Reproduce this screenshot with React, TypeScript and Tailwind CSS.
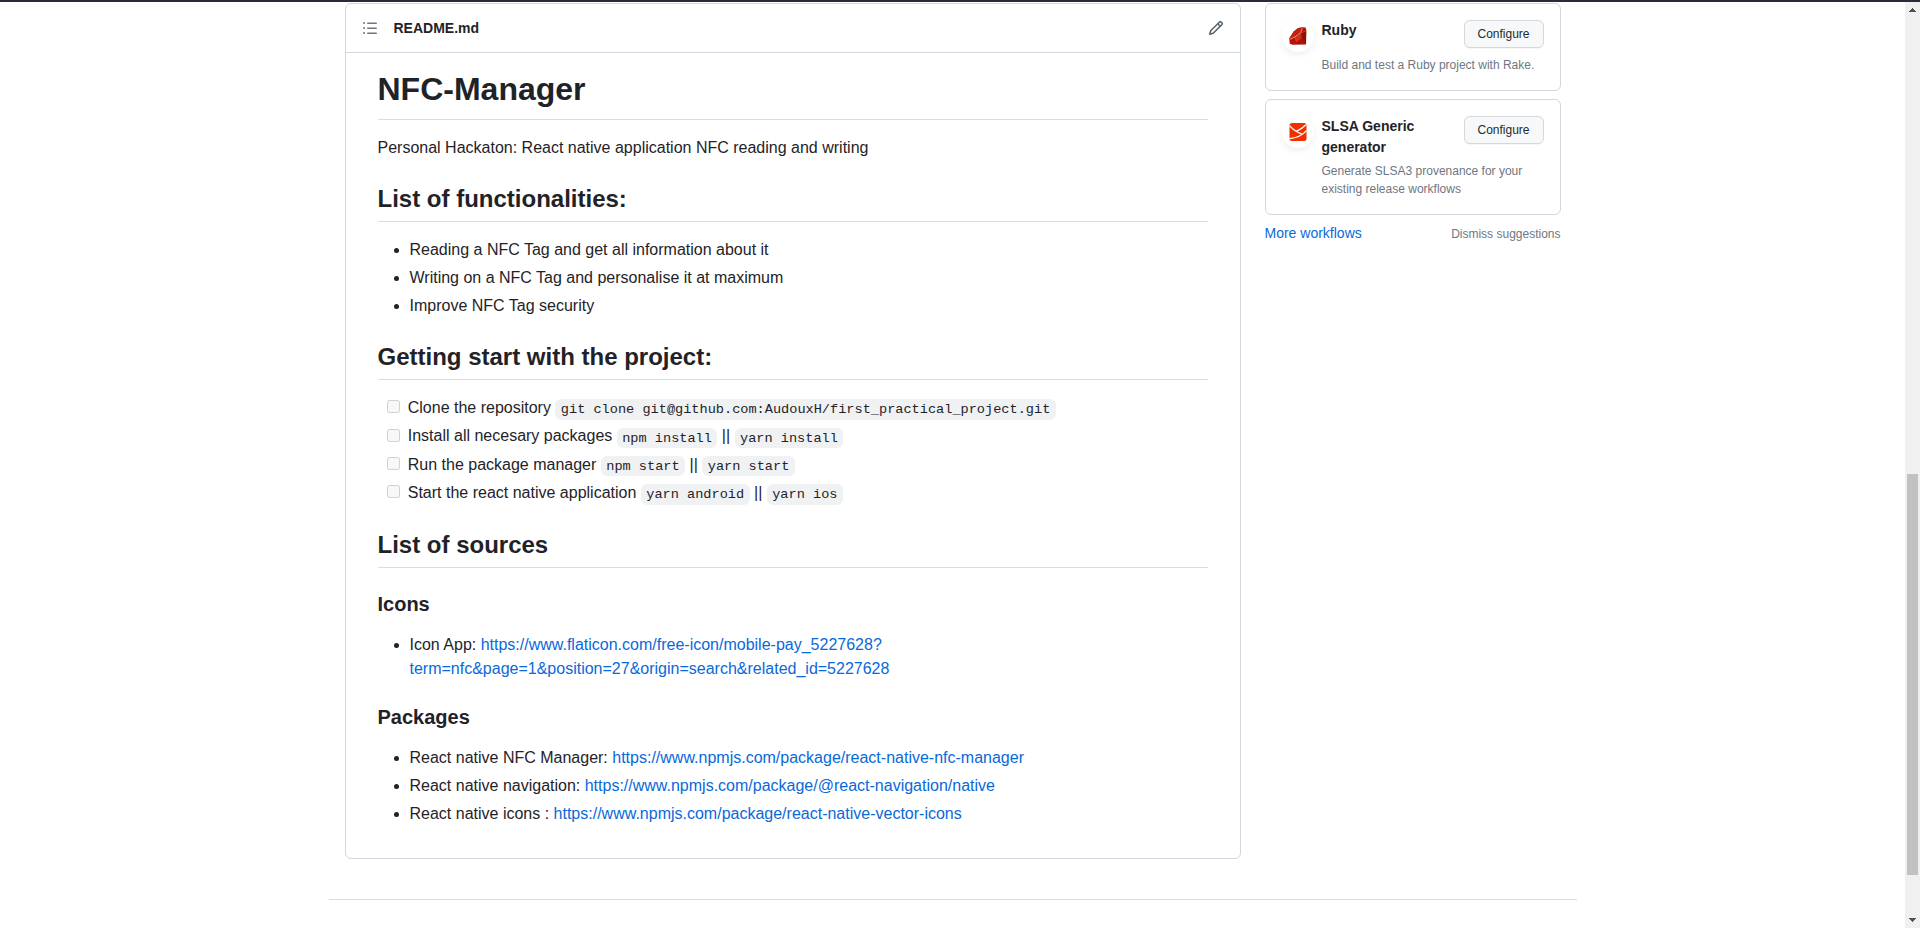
import type { ReactNode } from "react";

function ListIcon() {
  return (
    <svg width="16" height="16" viewBox="0 0 16 16" className="fill-[#6e7781]">
      <path d="M2 4a1 1 0 100-2 1 1 0 000 2zm3.75-1.5a.75.75 0 000 1.5h8.5a.75.75 0 000-1.5h-8.5zm0 5a.75.75 0 000 1.5h8.5a.75.75 0 000-1.5h-8.5zm0 5a.75.75 0 000 1.5h8.5a.75.75 0 000-1.5h-8.5zM3 8a1 1 0 11-2 0 1 1 0 012 0zm-1 6a1 1 0 100-2 1 1 0 000 2z" />
    </svg>
  );
}

function PencilIcon() {
  return (
    <svg width="16" height="16" viewBox="0 0 16 16" className="fill-[#57606a]">
      <path d="M11.013 1.427a1.75 1.75 0 012.474 0l1.086 1.086a1.75 1.75 0 010 2.474l-8.61 8.61c-.21.21-.47.364-.756.445l-3.251.93a.75.75 0 01-.927-.928l.929-3.25a1.75 1.75 0 01.445-.758l8.61-8.61zm1.414 1.06a.25.25 0 00-.354 0L10.811 3.75l1.439 1.44 1.263-1.263a.25.25 0 000-.354l-1.086-1.086zM11.189 6.25L9.75 4.81l-6.286 6.287a.25.25 0 00-.064.108l-.558 1.953 1.953-.558a.249.249 0 00.108-.064l6.286-6.286z" />
    </svg>
  );
}

function RubyIcon() {
  return (
    <svg width="18" height="18" viewBox="0 0 18 18">
      <path d="M13.6.3 16.6.6 17.3 3 17 17.4 3.5 17.8.8 16.8.2 11.5 4.6 4.6 9 .9Z" fill="#b01608" />
      <path d="M.4 11.5 5 4.5 9.5 1 13 .6 11.5 5.5 6 9.8 2 12Z" fill="#c4200f" />
      <path d="M12 6 17.2 3.4 17 17 13 11Z" fill="#8f1006" />
      <path d="M6 10 12 6 12.8 11.2 7.6 15Z" fill="#d92c18" />
      <path d="M13.4 11.2 16.8 16.8 7.6 15.6Z" fill="#a5140a" />
      <path d="M1 12.4 6 9.9 11.6 5.8 13.3 1.2" fill="none" stroke="#ec9a8c" strokeWidth=".9" />
      <path d="M6 10 7.4 14.8M11.7 6 16.8 4" fill="none" stroke="#d9614f" strokeWidth=".6" />
    </svg>
  );
}

function SlsaIcon() {
  return (
    <svg width="18" height="18" viewBox="0 0 18 18">
      <rect x=".5" width="17" height="18" rx="2.5" fill="#f03000" />
      <path d="M.5 2.6C3.8 6.4 7.8 9.2 12.6 10.8M17 1.8C14 4.8 11 6.8 7.2 8.4M17.5 7.6C13.2 12.4 7.6 15 .5 15.6" fill="none" stroke="#fff" strokeWidth="1.3" />
    </svg>
  );
}

function Heading2({ children }: { children: ReactNode }) {
  return (
    <h2 className="mt-6 mb-4 border-b border-[#d8dee4] pb-[7.2px] text-[24px] leading-[30px] font-bold">
      {children}
    </h2>
  );
}

function Heading3({ children }: { children: ReactNode }) {
  return <h3 className="mt-6 mb-4 text-[20px] leading-[25px] font-bold">{children}</h3>;
}

function Bullets({ children }: { children: ReactNode }) {
  return <ul className="list-disc space-y-1 pl-8">{children}</ul>;
}

function Link({ children }: { children: ReactNode }) {
  return <a className="text-[#0969da]">{children}</a>;
}

function Code({ children }: { children: ReactNode }) {
  return (
    <code className="rounded-md bg-[#afb8c133] px-[5.44px] py-[2.72px] font-['Liberation_Mono',monospace] text-[13.6px] whitespace-break-spaces">
      {children}
    </code>
  );
}

function Task({ label, commands }: { label: string; commands: string[] }) {
  return (
    <li>
      <input type="checkbox" disabled className="mr-[3.2px] mb-1 ml-[-22.4px] h-[13px] w-[13px] align-middle" /> {label}{" "}
      <Code>{commands[0]}</Code>
      {commands[1] && (
        <>
          {" || "}
          <Code>{commands[1]}</Code>
        </>
      )}
    </li>
  );
}

function WorkflowCard({ icon, title, text }: { icon: ReactNode; title: string; text: string }) {
  return (
    <div className="mb-2 flex items-start gap-2 rounded-md border border-[#d0d7de] p-4">
      <div className="flex h-8 w-8 shrink-0 items-center justify-center rounded-full bg-white shadow-[0_3px_6px_rgba(140,149,159,0.15)]">
        {icon}
      </div>
      <div className="flex-1">
        <div className="flex items-start justify-between">
          <h4 className="w-[120px] text-[14px] leading-[21px] font-bold">{title}</h4>
          <button className="mb-1 h-7 w-20 rounded-md border border-[#d5d8da] bg-[#f6f8fa] text-[12px] leading-5 font-medium text-[#24292f] shadow-[0_1px_0_rgba(31,35,40,0.04)]">
            Configure
          </button>
        </div>
        <p className="mt-1 text-[12px] leading-[18px] text-[#6e7781]">{text}</p>
      </div>
    </div>
  );
}

export default function App() {
  return (
    <div className="flex h-[928px] w-full flex-col overflow-hidden bg-white font-['Liberation_Sans',Arial,sans-serif] text-[#1f2328]">
      <div className="h-[2px] shrink-0 bg-[#2b2a3d]" />
      <div className="flex min-h-0 flex-1">
        <div className="flex-1">
          <div className="mx-auto w-[1280px] px-8 pt-px">
            <div className="flex items-start gap-6">
              <main className="w-[896px] rounded-md border border-[#d0d7de]">
                <div className="flex h-[49px] items-center border-b border-[#d0d7de] px-4">
                  <ListIcon />
                  <h2 className="ml-4 flex-1 text-[14px] leading-[21px] font-bold">README.md</h2>
                  <PencilIcon />
                </div>
                <article className="px-8 pt-[15.95px] pb-8 text-[16px] leading-[1.5]">
                  <h1 className="mb-4 border-b border-[#d8dee4] pb-[9.6px] text-[32px] leading-10 font-bold">
                    NFC-Manager
                  </h1>
                  <p>Personal Hackaton: React native application NFC reading and writing</p>
                  <Heading2>List of functionalities:</Heading2>
                  <Bullets>
                    <li>Reading a NFC Tag and get all information about it</li>
                    <li>Writing on a NFC Tag and personalise it at maximum</li>
                    <li>Improve NFC Tag security</li>
                  </Bullets>
                  <Heading2>Getting start with the project:</Heading2>
                  <ul className="space-y-1 pb-[0.2px] pl-8">
                    <Task
                      label="Clone the repository"
                      commands={["git clone git@github.com:AudouxH/first_practical_project.git"]}
                    />
                    <Task label="Install all necesary packages" commands={["npm install", "yarn install"]} />
                    <Task label="Run the package manager" commands={["npm start", "yarn start"]} />
                    <Task label="Start the react native application" commands={["yarn android", "yarn ios"]} />
                  </ul>
                  <Heading2>List of sources</Heading2>
                  <Heading3>Icons</Heading3>
                  <Bullets>
                    <li>
                      Icon App:{" "}
                      <Link>
                        https://www.flaticon.com/free-icon/mobile-pay_5227628?
                        <br />
                        term=nfc&amp;page=1&amp;position=27&amp;origin=search&amp;related_id=5227628
                      </Link>
                    </li>
                  </Bullets>
                  <Heading3>Packages</Heading3>
                  <Bullets>
                    <li>
                      React native NFC Manager: <Link>https://www.npmjs.com/package/react-native-nfc-manager</Link>
                    </li>
                    <li>
                      React native navigation: <Link>https://www.npmjs.com/package/@react-navigation/native</Link>
                    </li>
                    <li>
                      React native icons : <Link>https://www.npmjs.com/package/react-native-vector-icons</Link>
                    </li>
                  </Bullets>
                </article>
              </main>
              <aside className="w-[296px]">
                <WorkflowCard icon={<RubyIcon />} title="Ruby" text="Build and test a Ruby project with Rake." />
                <WorkflowCard
                  icon={<SlsaIcon />}
                  title="SLSA Generic generator"
                  text="Generate SLSA3 provenance for your existing release workflows"
                />
                <div className="flex items-center justify-between">
                  <a className="text-[14px] leading-[21px] text-[#0969da]">More workflows</a>
                  <button className="pt-px text-[12px] leading-[18px] text-[#6e7781]">Dismiss suggestions</button>
                </div>
              </aside>
            </div>
          </div>
          <footer className="mx-auto mt-10 w-[1248px] border-t border-[#d8dee4]" />
        </div>
        <div className="flex w-[15px] shrink-0 flex-col items-center justify-between bg-[#f0f0f0]">
          <svg width="15" height="15" viewBox="0 0 15 15" className="fill-[#505050]">
            <path d="M7 6h1v1h1v1h1v1h1v1H4V9h1V8h1V7h1z" />
          </svg>
          <div className="mt-[457px] mb-auto h-[401px] w-[11px] bg-[#c1c1c1]" />
          <svg width="15" height="15" viewBox="0 0 15 15" className="fill-[#505050]">
            <path d="M4 5h7v1h-1v1H9v1H8v1H7V8H6V7H5V6H4z" />
          </svg>
        </div>
      </div>
    </div>
  );
}
